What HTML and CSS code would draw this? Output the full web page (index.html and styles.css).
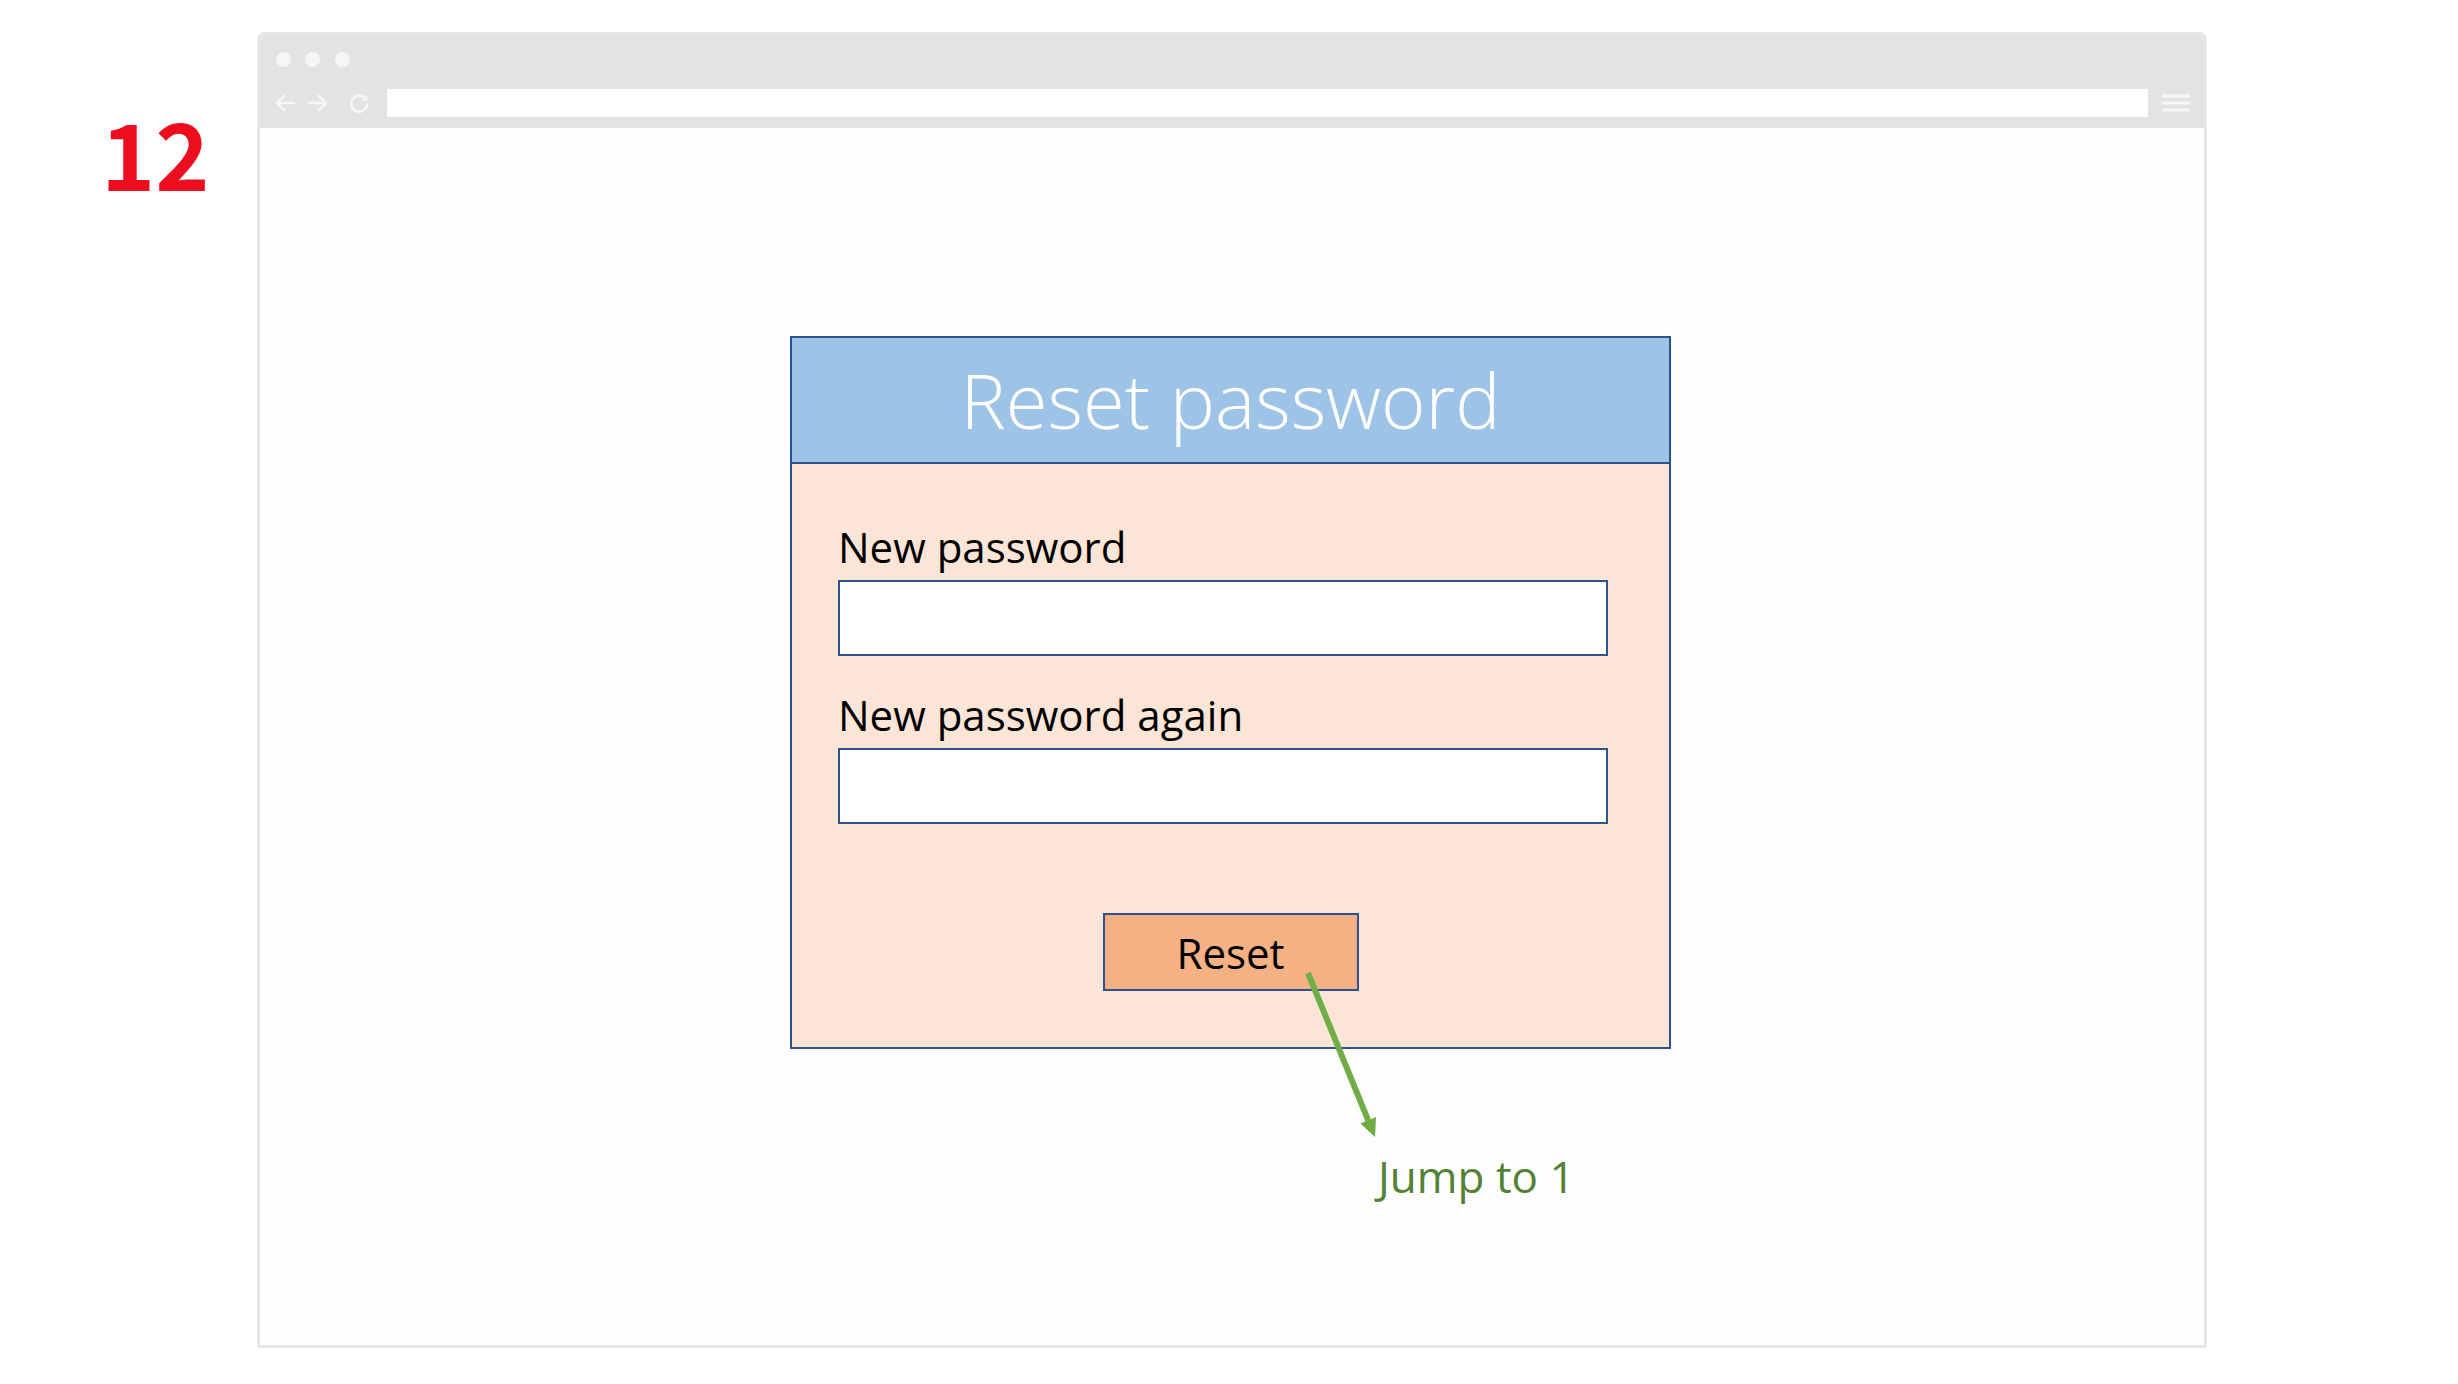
FILE: index.html
```html
<!DOCTYPE html>
<html lang="en">
<head>
<meta charset="utf-8">
<title>Reset password</title>
<link rel="stylesheet" href="styles.css">
</head>
<body>
<div class="stage">
  <div class="slide-num">12</div>
  <div class="browser">
    <div class="chrome">
      <div class="dots">
        <span class="dot"></span><span class="dot"></span><span class="dot"></span>
      </div>
      <div class="nav">
        <svg class="nav-icon back" width="22" height="20" viewBox="0 0 22 20"><path d="M20 10H3M10 3L3 10L10 17" fill="none" stroke="#f6f6f6" stroke-width="2.6" stroke-linecap="round" stroke-linejoin="round"/></svg>
        <svg class="nav-icon fwd" width="22" height="20" viewBox="0 0 22 20"><path d="M2 10H19M12 3L19 10L12 17" fill="none" stroke="#f6f6f6" stroke-width="2.6" stroke-linecap="round" stroke-linejoin="round"/></svg>
        <svg class="nav-icon reload" width="22" height="22" viewBox="0 0 22 22"><path d="M18 7.5A8 8 0 1 0 19 13" fill="none" stroke="#f6f6f6" stroke-width="2.8" stroke-linecap="round"/><path d="M19.5 2.5V8.5H13.5Z" fill="#f6f6f6"/></svg>
        <div class="address"></div>
        <svg class="menu" width="32" height="20" viewBox="0 0 32 20"><path d="M2 3H30M2 10H30M2 17H30" stroke="#f6f6f6" stroke-width="3"/></svg>
      </div>
    </div>
    <div class="content">
      <div class="card-wrap">
        <div class="card">
          <div class="card-head">Reset password</div>
          <div class="card-body">
            <label class="field-label" for="pw1">New password</label>
            <input class="field" id="pw1" type="password">
            <label class="field-label second" for="pw2">New password again</label>
            <input class="field" id="pw2" type="password">
            <button class="reset-btn" type="button">Reset</button>
          </div>
        </div>
        <svg class="jump-arrow" width="881" height="900" viewBox="0 0 881 900">
          <line x1="518" y1="637" x2="578.2" y2="784.3" stroke="#70ad47" stroke-width="6"/>
          <polygon points="585,801 586,781 570.4,787.4" fill="#70ad47"/>
        </svg>
        <div class="jump-label">Jump to 1</div>
      </div>
    </div>
  </div>
</div>
</body>
</html>
```
FILE: styles.css
```css
html, body {
  margin: 0;
  padding: 0;
  background: #ffffff;
}

body {
  width: 2458px;
  height: 1384px;
  overflow: hidden;
  font-family: "Open Sans", "Noto Sans", "Liberation Sans", sans-serif;
}

.stage {
  display: flex;
  align-items: flex-start;
  padding-top: 32px;
}

.slide-num {
  width: 257px;
  box-sizing: border-box;
  padding-left: 101px;
  margin-top: 73px;
  font-family: "Noto Sans CJK SC", "Liberation Sans", sans-serif;
  font-weight: 700;
  font-size: 92px;
  line-height: 1;
  color: #ec0e1e;
}

.browser {
  width: 1950px;
  height: 1316px;
  box-sizing: border-box;
  border: 3px solid #e6e6e6;
  border-radius: 8px 8px 2px 2px;
  background: #fdfdfd;
  display: flex;
  flex-direction: column;
}

.chrome {
  background: #e3e3e3;
  padding: 17px 0 11px 0;
  display: flex;
  flex-direction: column;
  gap: 22px;
  border-radius: 5px 5px 0 0;
}

.dots {
  display: flex;
  gap: 14.5px;
  padding-left: 15.5px;
  height: 15px;
}

.dot {
  width: 15px;
  height: 15px;
  border-radius: 50%;
  background: #f6f6f6;
}

.nav {
  display: flex;
  align-items: center;
  height: 28px;
  padding-left: 14px;
  padding-right: 12px;
}

.nav-icon {
  flex: none;
}

.fwd {
  margin-left: 11px;
}

.reload {
  margin-left: 19px;
}

.address {
  flex: 1;
  height: 28px;
  margin-left: 17px;
  background: #ffffff;
}

.menu {
  flex: none;
  margin-left: 12px;
}

.content {
  flex: 1;
}

.card-wrap {
  position: relative;
  width: 881px;
  margin: 208px 0 0 530px;
}

.card {
  box-sizing: border-box;
  width: 881px;
  border: 2px solid #2f528f;
  background: #fbe5d6;
}

.card-head {
  height: 124px;
  border-bottom: 2px solid #2f528f;
  background: #9dc3e6;
  display: flex;
  align-items: center;
  justify-content: center;
  color: #ffffff;
  font-weight: 300;
  font-size: 76px;
  line-height: 102px;
}

.card-body {
  display: flex;
  flex-direction: column;
  align-items: flex-start;
  padding: 54px 0 56px 46px;
}

.field-label {
  font-size: 42px;
  line-height: 57px;
  color: #000000;
  margin-bottom: 5px;
}

.field-label.second {
  margin-top: 30px;
}

.field {
  display: block;
  box-sizing: border-box;
  width: 770px;
  height: 76px;
  margin: 0;
  padding: 0 12px;
  border: 2px solid #2f528f;
  border-radius: 0;
  background: #ffffff;
  font-size: 30px;
  outline: none;
}

.reset-btn {
  align-self: center;
  margin: 89px 0 0 -46px;
  box-sizing: border-box;
  width: 256px;
  height: 78px;
  padding: 0;
  border: 2px solid #2f528f;
  border-radius: 0;
  background: #f4b183;
  color: #000000;
  font-family: "Open Sans", "Noto Sans", "Liberation Sans", sans-serif;
  font-size: 42px;
  line-height: 57px;
}

.jump-arrow {
  position: absolute;
  left: 0;
  top: 0;
  overflow: visible;
  pointer-events: none;
}

.jump-label {
  position: absolute;
  left: 588px;
  top: 810px;
  font-size: 44px;
  line-height: normal;
  color: #548235;
  white-space: nowrap;
}
```
